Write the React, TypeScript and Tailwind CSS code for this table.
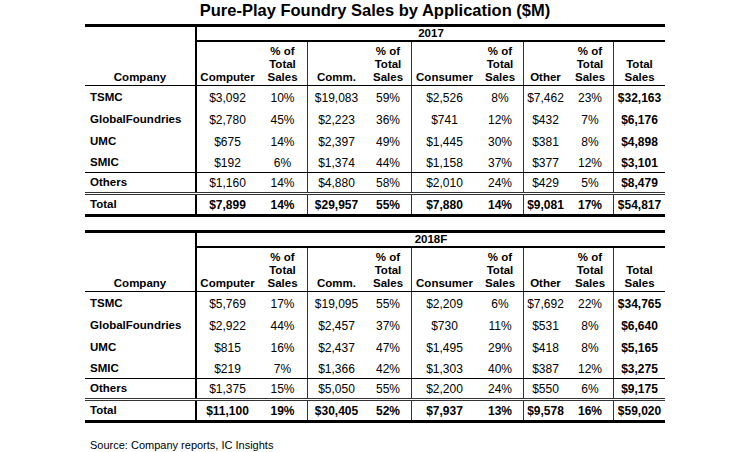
import React from "react";

type Row = string[];

const t2017: Row[] = [
  ["TSMC", "$3,092", "10%", "$19,083", "59%", "$2,526", "8%", "$7,462", "23%", "$32,163"],
  ["GlobalFoundries", "$2,780", "45%", "$2,223", "36%", "$741", "12%", "$432", "7%", "$6,176"],
  ["UMC", "$675", "14%", "$2,397", "49%", "$1,445", "30%", "$381", "8%", "$4,898"],
  ["SMIC", "$192", "6%", "$1,374", "44%", "$1,158", "37%", "$377", "12%", "$3,101"],
  ["Others", "$1,160", "14%", "$4,880", "58%", "$2,010", "24%", "$429", "5%", "$8,479"],
  ["Total", "$7,899", "14%", "$29,957", "55%", "$7,880", "14%", "$9,081", "17%", "$54,817"],
];

const t2018: Row[] = [
  ["TSMC", "$5,769", "17%", "$19,095", "55%", "$2,209", "6%", "$7,692", "22%", "$34,765"],
  ["GlobalFoundries", "$2,922", "44%", "$2,457", "37%", "$730", "11%", "$531", "8%", "$6,640"],
  ["UMC", "$815", "16%", "$2,437", "47%", "$1,495", "29%", "$418", "8%", "$5,165"],
  ["SMIC", "$219", "7%", "$1,366", "42%", "$1,303", "40%", "$387", "12%", "$3,275"],
  ["Others", "$1,375", "15%", "$5,050", "55%", "$2,200", "24%", "$550", "6%", "$9,175"],
  ["Total", "$11,100", "19%", "$30,405", "52%", "$7,937", "13%", "$9,578", "16%", "$59,020"],
];

const bodyCols =
  "grid grid-cols-[110px_63px_49px_58px_46px_66px_46px_44px_46px_52px]";

// vertical rules in the body, one entry per column
const colLine = [
  "",
  "border-l-2 border-black",
  "",
  "border-l border-[#333]",
  "",
  "border-l border-[#333]",
  "",
  "border-l border-[#333]",
  "",
  "border-l border-[#333]",
];

const pctHead = (
  <>
    % of
    <br />
    Total
    <br />
    Sales
  </>
);

const headCells: { label: React.ReactNode; line: string }[] = [
  { label: "Computer", line: "" },
  { label: pctHead, line: "" },
  { label: "Comm.", line: "border-l border-[#333]" },
  { label: pctHead, line: "" },
  { label: "Consumer", line: "border-l border-[#333]" },
  { label: pctHead, line: "" },
  { label: "Other", line: "border-l border-[#333]" },
  { label: pctHead, line: "" },
  {
    label: (
      <>
        Total
        <br />
        Sales
      </>
    ),
    line: "border-l border-[#333]",
  },
];

function SalesTable({ year, rows }: { year: string; rows: Row[] }) {
  const rowStyle = [
    "h-[22px]",
    "h-[22px]",
    "h-[22px]",
    "h-[21px] border-b border-black",
    "h-[22px] border-b-[3px] border-double border-[#333]",
    "h-[22px] border-b-[3px] border-black",
  ];

  return (
    <div className="w-[580px] border-t-[3px] border-black">
      <div className="flex border-b border-black">
        <div className="flex w-[110px] items-end justify-center pb-[1px] text-[11.5px] font-bold leading-[13px]">
          Company
        </div>
        <div className="flex w-[470px] flex-col border-l-2 border-black">
          <div className="flex h-[15px] items-center justify-center border-b-2 border-black text-[11.5px] font-bold">
            {year}
          </div>
          <div className="grid h-[43px] grid-cols-[61px_49px_58px_46px_66px_46px_44px_46px_52px]">
            {headCells.map((c, i) => (
              <div
                key={i}
                className={`flex items-end justify-center pb-[1px] text-center text-[11.5px] font-bold leading-[13px] ${c.line}`}
              >
                <span>{c.label}</span>
              </div>
            ))}
          </div>
        </div>
      </div>

      {rows.map((r, ri) => {
        const isTotal = ri === rows.length - 1;
        return (
          <div key={r[0]} className={`${bodyCols} ${rowStyle[ri]}`}>
            {r.map((v, ci) => (
              <div
                key={ci}
                className={`flex items-center pt-[1px] ${
                  ci === 0 ? "pl-[5px] font-bold text-[11.5px]" : "justify-center text-[12px]"
                } ${isTotal || ci === 9 ? "font-bold" : ""} ${colLine[ci]}`}
              >
                {v}
              </div>
            ))}
          </div>
        );
      })}
    </div>
  );
}

export default function App() {
  return (
    <div className="flex h-[452px] w-[750px] flex-col items-center bg-white font-['Liberation_Sans',Arial,sans-serif] text-black">
      <div className="h-[25px] text-[16.5px] font-bold leading-[20px]">
        Pure-Play Foundry Sales by Application ($M)
      </div>
      <SalesTable year="2017" rows={t2017} />
      <div className="mt-[13px]">
        <SalesTable year="2018F" rows={t2018} />
      </div>
      <div className="mt-[15px] w-[580px] pl-[5px] text-[11px] leading-[14px]">
        Source: Company reports, IC Insights
      </div>
    </div>
  );
}
